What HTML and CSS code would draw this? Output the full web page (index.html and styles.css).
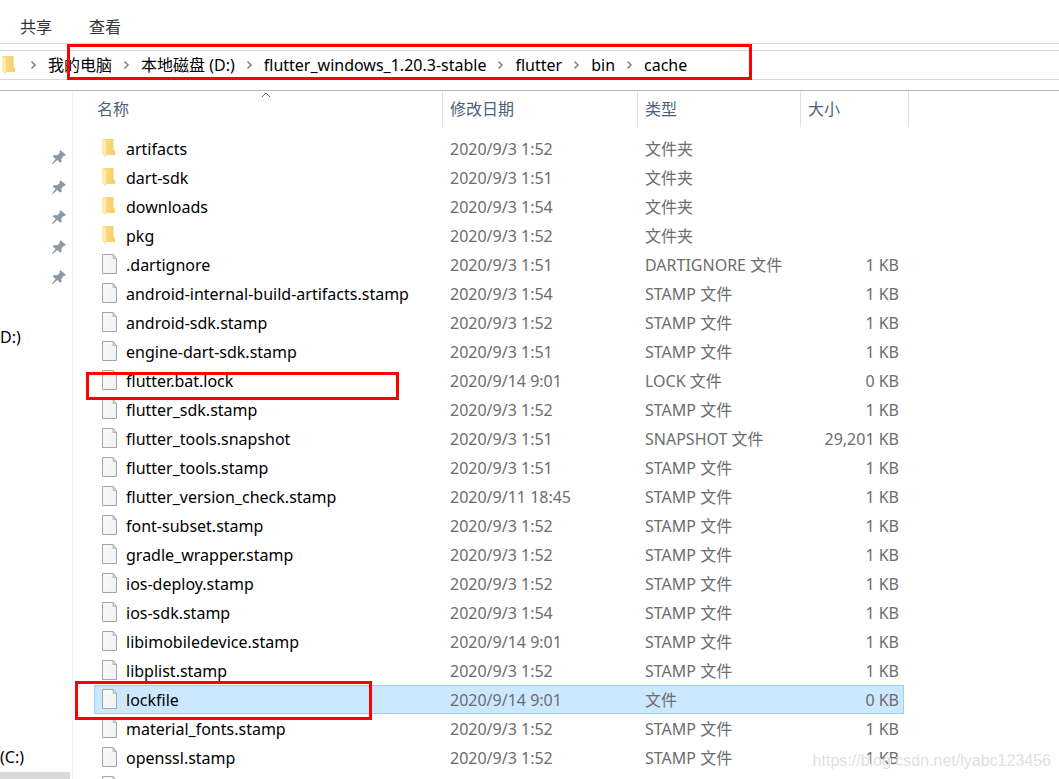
FILE: index.html
```html
<!DOCTYPE html>
<html lang="zh-CN">
<head>
<meta charset="utf-8">
<title>cache</title>
<link rel="stylesheet" href="styles.css">
</head>
<body>
<svg class="defs" aria-hidden="true">
  <defs>
    <linearGradient id="gold" x1="0" x2="1"><stop offset="0" stop-color="#fbdf8c"/><stop offset="1" stop-color="#f5cd66"/></linearGradient>
    <linearGradient id="paper" x1="0" y1="0" x2="1" y2="1"><stop offset="0" stop-color="#fafafa"/><stop offset="1" stop-color="#eff1f2"/></linearGradient>
  </defs>
  <symbol id="folder" viewBox="0 0 16 20">
    <path d="M0 1h11.500v11l1.500 1v4H3L0 16z" fill="url(#gold)"/>
    <path d="M0 1l4.500 2v13.500L3 19l-3-3z" fill="#ffebaa"/>
    <path d="M4.500 3v13.500L3 18.500" fill="none" stroke="#efd07a" stroke-width=".6"/>
  </symbol>
  <symbol id="file" viewBox="0 0 16 20">
    <path d="M.5.5H11l3.500 4v15H.5z" fill="url(#paper)" stroke="#a3a6a8"/>
    <path d="M11 .5v4h3.500z" fill="#dcdedf" stroke="#a3a6a8" stroke-width=".7"/>
  </symbol>
  <symbol id="pin" viewBox="0 0 16 16">
    <path d="M9.600 1.200l5.200 4.600-1.200 1.300-1-.2-2.200 2.500.3 3-1.500 1.400-3-2.700L1.600 15.300.8 14.700 4.600 10 1.600 7.200l1.600-1.100 3.100.2L8.800 4l-.3-1.500z" fill="#8d99a2"/>
  </symbol>
  <symbol id="chev" viewBox="0 0 8 10">
    <path d="M2 1.500L5.500 5 2 8.500" fill="none" stroke="#858585" stroke-width="1.600"/>
  </symbol>
</svg>

<div class="explorer">
  <nav class="tabs">
    <button type="button">共享</button>
    <button type="button">查看</button>
  </nav>

  <nav class="address">
    <svg class="icon root"><use href="#folder"/></svg>
    <svg class="sep"><use href="#chev"/></svg>
    <a href="#">我的电脑</a>
    <svg class="sep"><use href="#chev"/></svg>
    <a href="#">本地磁盘 (D:)</a>
    <svg class="sep"><use href="#chev"/></svg>
    <a href="#">flutter_windows_1.20.3-stable</a>
    <svg class="sep"><use href="#chev"/></svg>
    <a href="#">flutter</a>
    <svg class="sep"><use href="#chev"/></svg>
    <a href="#">bin</a>
    <svg class="sep"><use href="#chev"/></svg>
    <a href="#">cache</a>
    <span class="mark mark-path"></span>
  </nav>

  <div class="content">
    <aside class="tree">
      <ul>
        <li class="pinned"><svg><use href="#pin"/></svg></li>
        <li class="pinned"><svg><use href="#pin"/></svg></li>
        <li class="pinned"><svg><use href="#pin"/></svg></li>
        <li class="pinned"><svg><use href="#pin"/></svg></li>
        <li class="pinned"><svg><use href="#pin"/></svg></li>
        <li></li>
        <li>D:)</li>
        <li></li><li></li><li></li><li></li><li></li><li></li><li></li>
        <li></li><li></li><li></li><li></li><li></li><li></li>
        <li>(C:)</li>
        <li class="current"></li>
      </ul>
    </aside>

    <main class="files">
      <table>
        <colgroup><col class="c-name"><col class="c-date"><col class="c-type"><col class="c-size"><col class="c-end"></colgroup>
        <thead>
          <tr>
            <th class="sorted">名称<svg class="caret" viewBox="0 0 10 6"><path d="M.8 5.200L5 1l4.200 4.200" fill="none" stroke="#666"/></svg></th>
            <th>修改日期</th><th>类型</th><th colspan="2">大小</th>
          </tr>
        </thead>
        <tbody>
          <tr><td><div class="name"><svg class="icon"><use href="#folder"/></svg>artifacts</div></td><td>2020/9/3 1:52</td><td>文件夹</td><td></td><td></td></tr>
          <tr><td><div class="name"><svg class="icon"><use href="#folder"/></svg>dart-sdk</div></td><td>2020/9/3 1:51</td><td>文件夹</td><td></td><td></td></tr>
          <tr><td><div class="name"><svg class="icon"><use href="#folder"/></svg>downloads</div></td><td>2020/9/3 1:54</td><td>文件夹</td><td></td><td></td></tr>
          <tr><td><div class="name"><svg class="icon"><use href="#folder"/></svg>pkg</div></td><td>2020/9/3 1:52</td><td>文件夹</td><td></td><td></td></tr>
          <tr><td><div class="name"><svg class="icon"><use href="#file"/></svg>.dartignore</div></td><td>2020/9/3 1:51</td><td>DARTIGNORE 文件</td><td>1 KB</td><td></td></tr>
          <tr><td><div class="name"><svg class="icon"><use href="#file"/></svg>android-internal-build-artifacts.stamp</div></td><td>2020/9/3 1:54</td><td>STAMP 文件</td><td>1 KB</td><td></td></tr>
          <tr><td><div class="name"><svg class="icon"><use href="#file"/></svg>android-sdk.stamp</div></td><td>2020/9/3 1:52</td><td>STAMP 文件</td><td>1 KB</td><td></td></tr>
          <tr><td><div class="name"><svg class="icon"><use href="#file"/></svg>engine-dart-sdk.stamp</div></td><td>2020/9/3 1:51</td><td>STAMP 文件</td><td>1 KB</td><td></td></tr>
          <tr><td><div class="name"><svg class="icon"><use href="#file"/></svg>flutter.bat.lock<span class="mark mark-bat"></span></div></td><td>2020/9/14 9:01</td><td>LOCK 文件</td><td>0 KB</td><td></td></tr>
          <tr><td><div class="name"><svg class="icon"><use href="#file"/></svg>flutter_sdk.stamp</div></td><td>2020/9/3 1:52</td><td>STAMP 文件</td><td>1 KB</td><td></td></tr>
          <tr><td><div class="name"><svg class="icon"><use href="#file"/></svg>flutter_tools.snapshot</div></td><td>2020/9/3 1:51</td><td>SNAPSHOT 文件</td><td>29,201 KB</td><td></td></tr>
          <tr><td><div class="name"><svg class="icon"><use href="#file"/></svg>flutter_tools.stamp</div></td><td>2020/9/3 1:51</td><td>STAMP 文件</td><td>1 KB</td><td></td></tr>
          <tr><td><div class="name"><svg class="icon"><use href="#file"/></svg>flutter_version_check.stamp</div></td><td>2020/9/11 18:45</td><td>STAMP 文件</td><td>1 KB</td><td></td></tr>
          <tr><td><div class="name"><svg class="icon"><use href="#file"/></svg>font-subset.stamp</div></td><td>2020/9/3 1:52</td><td>STAMP 文件</td><td>1 KB</td><td></td></tr>
          <tr><td><div class="name"><svg class="icon"><use href="#file"/></svg>gradle_wrapper.stamp</div></td><td>2020/9/3 1:52</td><td>STAMP 文件</td><td>1 KB</td><td></td></tr>
          <tr><td><div class="name"><svg class="icon"><use href="#file"/></svg>ios-deploy.stamp</div></td><td>2020/9/3 1:52</td><td>STAMP 文件</td><td>1 KB</td><td></td></tr>
          <tr><td><div class="name"><svg class="icon"><use href="#file"/></svg>ios-sdk.stamp</div></td><td>2020/9/3 1:54</td><td>STAMP 文件</td><td>1 KB</td><td></td></tr>
          <tr><td><div class="name"><svg class="icon"><use href="#file"/></svg>libimobiledevice.stamp</div></td><td>2020/9/14 9:01</td><td>STAMP 文件</td><td>1 KB</td><td></td></tr>
          <tr><td><div class="name"><svg class="icon"><use href="#file"/></svg>libplist.stamp</div></td><td>2020/9/3 1:52</td><td>STAMP 文件</td><td>1 KB</td><td></td></tr>
          <tr class="selected"><td><div class="name"><svg class="icon"><use href="#file"/></svg>lockfile<span class="mark mark-lock"></span></div></td><td>2020/9/14 9:01</td><td>文件</td><td>0 KB</td><td></td></tr>
          <tr><td><div class="name"><svg class="icon"><use href="#file"/></svg>material_fonts.stamp</div></td><td>2020/9/3 1:52</td><td>STAMP 文件</td><td>1 KB</td><td></td></tr>
          <tr><td><div class="name"><svg class="icon"><use href="#file"/></svg>openssl.stamp</div></td><td>2020/9/3 1:52</td><td>STAMP 文件</td><td>1 KB</td><td></td></tr>
          <tr><td><div class="name"><svg class="icon"><use href="#file"/></svg></div></td><td></td><td></td><td></td><td></td></tr>
        </tbody>
      </table>
    </main>
  </div>
  <div class="watermark">https://blog.csdn.net/lyabc123456</div>
</div>
</body>
</html>
```
FILE: styles.css
```css
* { box-sizing: border-box; }

body {
  margin: 0;
  background: #fff;
  color: #000;
  font: 16px/28px "Noto Sans", "Noto Sans CJK SC", sans-serif;
}

.defs { position: absolute; width: 0; height: 0; }

.explorer {
  position: relative;
  display: flex;
  flex-direction: column;
  height: 100vh;
  overflow: hidden;
}

.tabs {
  display: flex;
  flex: none;
  gap: 37px;
  height: 44px;
  padding: 11px 20px 0;
  border-bottom: 1px solid #dadada;
}

.tabs button {
  padding: 0;
  border: 0;
  background: none;
  color: #333;
  font: inherit;
}

.address {
  position: relative;
  display: flex;
  flex: none;
  align-items: center;
  height: 30px;
  margin-top: 6px;
  border: solid #d9d9d9;
  border-width: 1px 0;
  white-space: nowrap;
}

.address a { color: #000; text-decoration: none; }

.icon { flex: none; width: 16px; height: 20px; }
.root { margin-left: 2px; }
.sep { flex: none; width: 29px; height: 10px; }
.root + .sep { margin-left: 1px; }

.content {
  display: flex;
  flex: 1;
  min-height: 0;
  margin-top: 10px;
  border-top: 1px solid #b9b9b9;
}

.tree {
  flex: none;
  width: 73px;
  padding-top: 51px;
  border-right: 1px solid #f3f3f3;
}

.tree ul { margin: 0; padding: 0; list-style: none; }

.tree li {
  display: flex;
  align-items: center;
  width: 70px;
  height: 30px;
}

.tree .pinned { justify-content: flex-end; padding-right: 3px; }
.pinned svg { width: 16px; height: 16px; }
.tree .current { background: #d9d9d9; }

.files { flex: 1; min-width: 0; padding-left: 21px; }

table {
  width: 815px;
  table-layout: fixed;
  border-collapse: separate;
  border-spacing: 0;
}

.c-name { width: 349px; }
.c-date { width: 195px; }
.c-type { width: 163px; }
.c-size { width: 103px; }
.c-end { width: 5px; }

th {
  position: relative;
  height: 36px;
  padding: 0 0 0 7px;
  border-right: 1px solid #e2e2e2;
  color: #4c607a;
  font-weight: 400;
  text-align: left;
}

th.sorted { padding-left: 3px; }

.caret {
  position: absolute;
  top: 1px;
  left: 50%;
  width: 10px;
  height: 6px;
  margin-left: -7px;
}

tbody::before { content: ""; display: table-row; height: 7px; }

td {
  height: 29px;
  padding: 0 0 0 8px;
  color: #6d6d6d;
  line-height: 26px;
  white-space: nowrap;
}

td + td { padding-left: 7px; }
td:nth-child(4) { padding-right: 5px; text-align: right; }
td:last-child { padding: 0; }

.name {
  position: relative;
  display: flex;
  align-items: center;
  gap: 8px;
  color: #000;
}

.name .icon { margin-bottom: 2px; }

.selected td:not(:last-child) {
  background: #cce8ff;
  box-shadow: inset 0 1px #99d1ff, inset 0 -1px #99d1ff;
}
.selected td:first-child { box-shadow: inset 0 1px #99d1ff, inset 0 -1px #99d1ff, inset 1px 0 #99d1ff; }
.selected td:nth-child(4) { box-shadow: inset 0 1px #99d1ff, inset 0 -1px #99d1ff, inset -1px 0 #99d1ff; }

/* Red call-out frames drawn over the listing */
.mark {
  position: absolute;
  z-index: 1;
  border: 3px solid #f00;
  pointer-events: none;
}

.mark-path { top: -7px; left: 67px; width: 685px; height: 36px; }
.mark-bat { top: 4px; left: -16px; width: 313px; height: 28px; }
.mark-lock { top: -6px; left: -27px; width: 297px; height: 39px; }

.watermark {
  position: absolute;
  right: 8px;
  bottom: 4px;
  color: rgba(215, 215, 215, .8);
  font: 16px/28px "Liberation Sans", sans-serif;
  text-shadow: 1px 1px #fff;
}
```
